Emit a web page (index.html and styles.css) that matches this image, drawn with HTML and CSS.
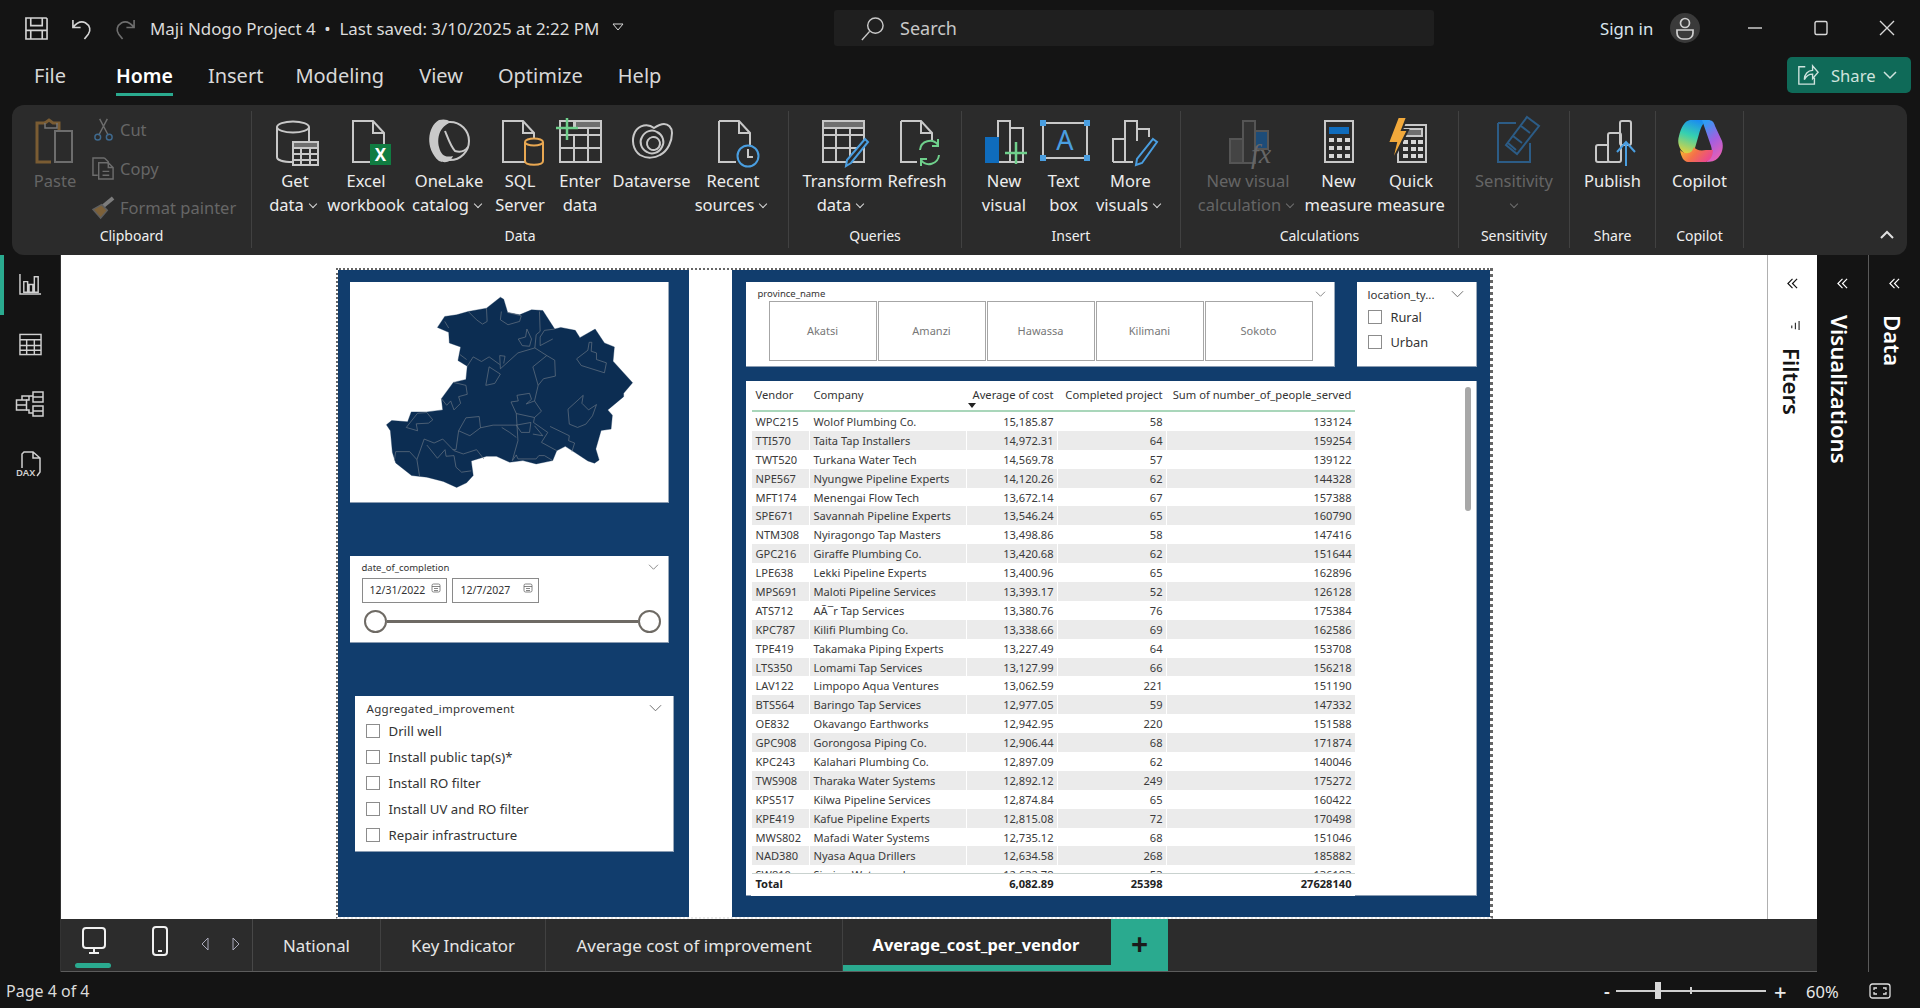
FILE: index.html
```html
<!DOCTYPE html>
<html lang="en">
<head>
<meta charset="utf-8">
<title>Maji Ndogo Project 4</title>
<link rel="stylesheet" href="styles.css">
</head>
<body>
<div class="app">
  <header class="titlebar">
    <svg class="tb-ic save" viewBox="0 0 24 24"><path d="M1 1h21l1 1v21H1zM6 1v8h12V1M6 23v-9h12v9M1 14h22"/></svg>
    <svg class="tb-ic undo" viewBox="0 0 24 24"><path d="M2 3v8h8M2 11c4-5 9-7 13-5 5 3 6 8 3 12l-4 5"/></svg>
    <svg class="tb-ic redo" viewBox="0 0 24 24"><path d="M22 3v8h-8M22 11c-4-5-9-7-13-5-5 3-6 8-3 12l4 5"/></svg>
    <span class="doc-title">Maji Ndogo Project 4&nbsp; •&nbsp; Last saved: 3/10/2025 at 2:22 PM</span>
    <svg class="doc-caret" viewBox="0 0 12 8"><path d="M1 1h10L6 7z"/></svg>
    <div class="searchbox">
      <svg viewBox="0 0 26 26"><circle cx="16" cy="10" r="8"/><path d="M10 16L2 25"/></svg>
      <span>Search</span>
    </div>
    <span class="signin">Sign in</span>
    <svg class="avatar" viewBox="0 0 30 30"><circle cx="15" cy="15" r="15" class="av-bg"/><circle cx="15" cy="10" r="4.5"/><path d="M7 17h16v3a6 6 0 0 1-6 6h-4a6 6 0 0 1-6-6z"/></svg>
    <div class="winbtns">
      <svg viewBox="0 0 16 16"><path d="M1 8h14"/></svg>
      <svg viewBox="0 0 16 16"><rect x="2" y="1.500" width="12" height="13" rx="1.500"/></svg>
      <svg viewBox="0 0 16 16"><path d="M1 1l14 14M15 1L1 15"/></svg>
    </div>
  </header>

  <nav class="tabs">
    <a class="tab file">File</a>
    <a class="tab active">Home</a>
    <a class="tab ins">Insert</a>
    <a class="tab">Modeling</a>
    <a class="tab">View</a>
    <a class="tab">Optimize</a>
    <a class="tab">Help</a>
    <button class="share">
      <svg viewBox="0 0 24 24"><path d="M9 3H2v19h17v-7M8 17c0-6 4-10 9-10V2l6 7-6 7v-5c-4 0-7 2-9 6z"/></svg>
      <span>Share</span>
      <svg class="share-v" viewBox="0 0 14 8"><path d="M1 1l6 6 6-6"/></svg>
    </button>
  </nav>

  <section class="ribbon">
    <div class="group g-clip">
      <div class="items">
        <div class="rb dim">
          <svg class="ri" viewBox="0 0 48 48"><path class="brown" d="M14 6H6v39h14"/><path class="brown" d="M14 6l4-3 4 3h6v8"/><path d="M14 6v5h12V6" class="brown thin"/><rect x="24" y="14" width="17" height="31" fill="#2b2b2b" stroke="#6d6d6d"/></svg>
          <span>Paste</span>
        </div>
        <div class="clip-list">
          <div class="ci">
            <svg viewBox="0 0 24 24"><path d="M8 1l9 17M16 1L7 18"/><circle cx="6" cy="20" r="3" stroke="#3f6a8f"/><circle cx="18" cy="20" r="3" stroke="#3f6a8f"/></svg>
            <span>Cut</span>
          </div>
          <div class="ci">
            <svg viewBox="0 0 24 24"><path d="M13 1H1v18h5M13 1l4 4v2"/><path d="M7 6h10l5 5v12H7zM17 6v5h5M11 15h7M11 19h7"/></svg>
            <span>Copy</span>
          </div>
          <div class="ci">
            <svg viewBox="0 0 24 24"><path d="M22 2L10 12" stroke-width="4" stroke="#7c7c7c"/><path d="M10 9l6 6-7 8-8-9z" fill="#7d6139" stroke="#5f5f5f"/></svg>
            <span>Format painter</span>
          </div>
        </div>
      </div>
      <div class="glabel">Clipboard</div>
    </div>

    <div class="group g-data">
      <div class="items">
        <div class="rb">
          <svg class="ri" viewBox="0 0 48 48"><path d="M6 10v30c0 3 6 5 16 5M38 10v15"/><ellipse cx="22" cy="10" rx="16" ry="5.500"/><rect x="22" y="25" width="25" height="23" fill="#2b2b2b"/><rect x="22" y="25" width="25" height="6" class="fgray"/><path d="M22 37h25M22 43h25M30 31v17M39 31v17"/></svg>
          <span>Get<br>data<i class="chev"></i></span>
        </div>
        <div class="rb">
          <svg class="ri" viewBox="0 0 48 48"><path d="M11 4h20l11 12v29H11zM31 4v12h11"/><rect x="28" y="27" width="21" height="21" fill="#107c41" stroke="none"/><text x="38.500" y="44" class="xl">X</text></svg>
          <span>Excel<br>workbook</span>
        </div>
        <div class="rb">
          <svg class="ri" viewBox="0 0 48 48"><circle cx="25" cy="24" r="19"/><path d="M14 3C2 10 0 32 14 44c8 3 12 0 14-5-8 2-12-1-14-9-2-9 0-20 12-25-4-3-8-3-12-2z" fill="#c9c9c9" stroke="none"/><path d="M20 14c4 10 6 16 10 20 6 2 10 0 13-4"/></svg>
          <span>OneLake<br>catalog<i class="chev"></i></span>
        </div>
        <div class="rb">
          <svg class="ri" viewBox="0 0 48 48"><path d="M7 4h20l11 12v29H7zM27 4v12h11"/><path class="org" d="M29 25v19c0 5 18 5 18 0V25" fill="#2b2b2b"/><ellipse class="org" cx="38" cy="25" rx="9" ry="3.500" fill="#2b2b2b"/></svg>
          <span>SQL<br>Server</span>
        </div>
        <div class="rb">
          <svg class="ri" viewBox="0 0 48 48"><rect x="4" y="4" width="41" height="41"/><rect x="19" y="4" width="26" height="7" class="fgray"/><path d="M4 18h41M4 31h41M18 18v27M32 11v34M18 4v6"/><path d="M11 1v22M0 11h22" class="grn"/></svg>
          <span>Enter<br>data</span>
        </div>
        <div class="rb">
          <svg class="ri" viewBox="0 0 48 48"><path d="M26 11C20 6 11 8 7 15 3 23 5 33 12 38c7 4 15 3 20 0 8-4 12-14 12-22 0-6-4-9-8-9-4 0-7 2-10 4z"/><path d="M14 20c3-6 10-8 15-5 6 3 8 10 5 15-3 6-10 8-15 5-6-3-8-10-5-15z"/><path d="M20 23c2-3 6-4 9-2 3 2 4 6 2 9-2 3-6 4-9 2-3-2-4-6-2-9z"/></svg>
          <span>Dataverse</span>
        </div>
        <div class="rb">
          <svg class="ri" viewBox="0 0 48 48"><path d="M10 4h20l11 12v12M10 4v41h17M30 4v12h11"/><circle cx="39" cy="39" r="10.500" class="blue" fill="#2b2b2b"/><path d="M39 32v8h5"/></svg>
          <span>Recent<br>sources<i class="chev"></i></span>
        </div>
      </div>
      <div class="glabel">Data</div>
    </div>

    <div class="group g-query">
      <div class="items">
        <div class="rb">
          <svg class="ri" viewBox="0 0 48 48"><rect x="4" y="4" width="41" height="41"/><rect x="4" y="4" width="41" height="7" class="fgray"/><path d="M4 18h41M4 31h41M17 11v34M31 11v34"/><path d="M46 22l3 3-17 21-5 3 1-6z" class="blue" fill="#2b2b2b"/></svg>
          <span>Transform<br>data<i class="chev"></i></span>
        </div>
        <div class="rb">
          <svg class="ri" viewBox="0 0 48 48"><path d="M8 4h20l11 12v8M8 4v41h16M28 4v12h11"/><path class="grn thin" d="M27 33a10 10 0 0 1 18-5M46 38a10 10 0 0 1-18 5M45 22v7h-6M28 49v-7h6"/></svg>
          <span>Refresh</span>
        </div>
      </div>
      <div class="glabel">Queries</div>
    </div>

    <div class="group g-insert">
      <div class="items">
        <div class="rb">
          <svg class="ri" viewBox="0 0 48 48"><rect x="30" y="11" width="13" height="34" class="fgray2"/><rect x="18" y="4" width="12" height="41"/><rect x="6" y="21" width="12" height="24" fill="#0f6cbd" stroke="#0f6cbd"/><path d="M36 25v22M25 36h22" class="grn"/></svg>
          <span>New<br>visual</span>
        </div>
        <div class="rb">
          <svg class="ri" viewBox="0 0 48 48"><rect x="3" y="6" width="44" height="35"/><path d="M1 4h4v4H1zM45 4h4v4h-4zM1 39h4v4H1zM45 39h4v4h-4z" fill="#4a9ee0" stroke="#4a9ee0"/><text x="25" y="33" class="tbA">A</text></svg>
          <span>Text<br>box</span>
        </div>
        <div class="rb">
          <svg class="ri" viewBox="0 0 48 48"><path d="M6 45V22h12M18 45V4h12v20M30 12h12v8M6 45h20"/><path d="M46 22l4 3-15 21-6 2 1-6z" class="blue" fill="#2b2b2b"/></svg>
          <span>More<br>visuals<i class="chev"></i></span>
        </div>
      </div>
      <div class="glabel">Insert</div>
    </div>

    <div class="group g-calc">
      <div class="items">
        <div class="rb dim">
          <svg class="ri" viewBox="0 0 48 48"><rect x="6" y="22" width="13" height="24" fill="#444" stroke="#555"/><rect x="19" y="4" width="12" height="42" fill="#333" stroke="#555"/><rect x="31" y="14" width="13" height="18" fill="#1d4c78" stroke="#555"/><text x="27" y="46" class="fx">fx</text></svg>
          <span>New visual<br>calculation<i class="chev"></i></span>
        </div>
        <div class="rb">
          <svg class="ri" viewBox="0 0 48 48"><rect x="10" y="4" width="28" height="41"/><rect x="14" y="10" width="20" height="7" fill="#0f6cbd" stroke="none"/><path d="M14 21h5v4h-5zM22 21h5v4h-5zM30 21h5v4h-5zM14 29h5v4h-5zM22 29h5v4h-5zM30 29h5v4h-5zM14 37h5v4h-5zM22 37h5v4h-5zM30 37h5v4h-5z" fill="#d6d6d6" stroke="none"/></svg>
          <span>New<br>measure</span>
        </div>
        <div class="rb">
          <svg class="ri" viewBox="0 0 48 48"><rect x="11" y="8" width="28" height="37"/><rect x="16" y="12" width="19" height="7" class="fgray" stroke="none"/><path d="M16 23h5v4h-5zM24 23h5v4h-5zM31 23h5v4h-5zM16 30h5v4h-5zM24 30h5v4h-5zM31 30h5v4h-5zM16 37h5v4h-5zM24 37h5v4h-5zM31 37h5v4h-5z" fill="#d6d6d6" stroke="none"/><path d="M11 0h9l-5 13h6L4 47l5-21H1z" fill="#f2a93b" stroke="#2b2b2b"/></svg>
          <span>Quick<br>measure</span>
        </div>
      </div>
      <div class="glabel">Calculations</div>
    </div>

    <div class="group g-sens">
      <div class="items">
        <div class="rb dim">
          <svg class="ri" viewBox="0 0 48 48"><path class="dblue" d="M8 6h18M8 6v39h32V26"/><path class="dblue" d="M37 0l12 9-22 28-11-9z" fill="#2b2b2b"/><path class="dblue" d="M18 26l8 7M23 19l9 7M31 9l9 7"/></svg>
          <span>Sensitivity<br><i class="chev solo"></i></span>
        </div>
      </div>
      <div class="glabel">Sensitivity</div>
    </div>

    <div class="group g-share">
      <div class="items">
        <div class="rb">
          <svg class="ri" viewBox="0 0 48 48"><rect x="7" y="28" width="13" height="17" rx="2"/><rect x="19" y="16" width="13" height="29" rx="2" fill="#2b2b2b"/><rect x="31" y="4" width="11" height="24" rx="2"/><path d="M31 45h-8" /><path d="M37 49V26M28 35l9-10 9 10" class="blue"/></svg>
          <span>Publish</span>
        </div>
      </div>
      <div class="glabel">Share</div>
    </div>

    <div class="group g-copilot">
      <div class="items">
        <div class="rb">
          <svg class="ri" viewBox="0 0 48 48">
            <defs>
              <linearGradient id="cpa" x1="0.600" y1="0" x2="0.300" y2="1"><stop offset="0" stop-color="#1b8df0"/><stop offset=".45" stop-color="#35d0b0"/><stop offset="1" stop-color="#e8d23a"/></linearGradient>
              <linearGradient id="cpb" x1="0.300" y1="0" x2="0.700" y2="1"><stop offset="0" stop-color="#2f9cf5"/><stop offset=".5" stop-color="#a35fe0"/><stop offset="1" stop-color="#ef5fb0"/></linearGradient>
              <linearGradient id="cpc" x1="0" y1="0" x2="1" y2="0.400"><stop offset="0" stop-color="#f8c22e"/><stop offset=".55" stop-color="#f4704a"/><stop offset="1" stop-color="#ea4a8a"/></linearGradient>
            </defs>
            <path d="M14 3H32C27 5 25 10 23 17L19 31C17 36 12 40 8 36C3 32 1 25 3 19C5 11 8 4 14 3Z" fill="url(#cpa)" stroke="none"/>
            <path d="M26 3h6c4 0 6 2 7 6l7 15c2 6 0 13-4 17-3 3-7 4-12 4 5-4 7-10 5-16z" fill="url(#cpb)" stroke="none"/>
            <path d="M4 33c3 3 8 5 12 1l2-4c2 3 6 4 12 3h7c0 5-2 10-7 12H12C8 45 5 40 4 33z" fill="url(#cpc)" stroke="none"/>
          </svg>
          <span>Copilot</span>
        </div>
      </div>
      <div class="glabel">Copilot</div>
    </div>
    <svg class="collapse" viewBox="0 0 14 8"><path d="M1 7l6-6 6 6"/></svg>
  </section>

  <main class="main">
    <aside class="rail">
      <div class="rail-item on"><svg viewBox="0 0 24 24"><path d="M1 1v21h22M5 9h4v11H5zM10.500 12h4v8h-4zM16 4h4v16h-4z"/></svg></div>
      <div class="rail-item"><svg viewBox="0 0 24 24"><rect x="1" y="1.500" width="22" height="21"/><path d="M1 7h22M1 13h22M1 18h22M8 7v16M16 7v16" /></svg></div>
      <div class="rail-item"><svg class="wide" viewBox="0 0 28 28"><rect x="0.500" y="10" width="10" height="10"/><path d="M0.500 15h10M17 2h10v10H17zM17 7h10M17 16h10v10H17zM17 21h10M10 10h3V6h4M10 20h3v3h4M6 10V6h11"/></svg></div>
      <div class="rail-item"><svg class="dax" viewBox="0 0 28 26"><path d="M6 17V3l2-2h9l7 6v14l-3 4M17 1v6h7"/><text x="0" y="25" class="daxt">DAX</text></svg></div>
    </aside>

    <div class="center">
      <div class="workspace">
        <div class="canvas">
          <div class="report">
            <div class="panel left-panel">
              <div class="card map-card">
                <svg viewBox="60 66 956 664">
                  <path class="land" d="M168 497L184 484L232 488L243 458L290 458L338 452L334 418L370 369L408 360L412 320L384 303L392 262L358 250L356 218L322 203L344 170L380 165L415 155L470 145L512 112L522 118L534 158L570 165L606 150L640 152L676 208L694 203L738 212L752 234L798 208L826 250L856 262L852 305L911 370L884 402L884 412L836 452L850 468L846 510L816 514L800 570L810 603L796 613L776 606L736 580L708 562L682 575L670 605L620 615L580 605L540 610L500 592L470 592L424 606L430 650L410 672L380 686L340 668L290 655L244 650L196 612L186 580L180 515Z"/>
                  <path class="bound" d="M415 155L440 180L458 193L472 185L470 145M515 155L512 180L535 195L570 185L575 168L534 158M630 155L632 215L620 225L616 265L565 280L512 328L510 288L526 290L522 312M412 320L430 292L455 306L478 292L510 315M592 208L606 238L600 260L578 258L566 238L588 232ZM676 208L645 212L632 232L632 258L670 238M616 265L652 288L676 302L678 350L642 358L626 378L610 322L652 288M626 378L615 425L636 456L615 475L560 463L544 428L566 425L562 408L600 402L606 420L590 434L615 425M560 463L565 545L548 605M615 475L612 490L655 520L636 550L682 575M662 502L720 530L718 545L736 552L728 578M780 248L788 248L786 275L802 280L802 300L832 310L826 340L756 318L742 298L776 272ZM762 408L758 432L778 452L802 436L790 470L770 495L745 505L720 495L716 450ZM478 322L512 344L495 372L468 378ZM370 369L408 378L412 405L386 412L392 432L372 452L362 425L350 438L334 418M262 462L290 460L308 482L295 492L258 494L262 515L228 505ZM408 476L448 472L452 506L420 530L386 515ZM452 506L490 498L560 498L604 490L600 520L575 520L560 498M516 505L540 520L560 535M386 515L378 572L368 572M282 540L260 602L238 578L196 578L192 605M260 602L268 652M282 540L312 552L338 540L372 575L400 585L440 572L462 600M290 558L322 598L345 572L348 592L372 590L378 625L395 640L424 636M548 605L560 588L565 600L620 600L628 590L645 590L670 605M615 500L640 530L610 525M344 185L356 205M390 285L410 300"/>
                </svg>
              </div>
              <div class="card date-card">
                <div class="date-head"><span>date_of_completion</span><svg class="chv" viewBox="0 0 14 8"><path d="M1 1l6 6 6-6"/></svg></div>
                <div class="date-inputs">
                  <div class="date-in di1"><span>12/31/2022</span><svg viewBox="0 0 10 10"><rect x="1" y="1" width="8" height="8" rx="1.500"/><path d="M1 3.500h8M3 5.500h4M3 7.500h4"/></svg></div>
                  <div class="date-in di2"><span>12/7/2027</span><svg viewBox="0 0 10 10"><rect x="1" y="1" width="8" height="8" rx="1.500"/><path d="M1 3.500h8M3 5.500h4M3 7.500h4"/></svg></div>
                </div>
                <div class="slider"><i class="thumb"></i><i class="track"></i><i class="thumb"></i></div>
              </div>
              <div class="card agg-card">
                <div class="agg-head"><span>Aggregated_improvement</span><svg class="chv" viewBox="0 0 14 8"><path d="M1 1l6 6 6-6"/></svg></div>
                <div class="opt"><i class="cb"></i>Drill well</div>
                <div class="opt"><i class="cb"></i>Install public tap(s)*</div>
                <div class="opt"><i class="cb"></i>Install RO filter</div>
                <div class="opt"><i class="cb"></i>Install UV and RO filter</div>
                <div class="opt"><i class="cb"></i>Repair infrastructure</div>
              </div>
            </div>

            <div class="panel right-panel">
              <div class="slicers">
                <div class="card prov-card">
                  <div class="prov-head"><span>province_name</span><svg class="chv" viewBox="0 0 14 8"><path d="M1 1l6 6 6-6"/></svg></div>
                  <div class="prov-btns">
                    <div class="pb">Akatsi</div><div class="pb">Amanzi</div><div class="pb">Hawassa</div><div class="pb">Kilimani</div><div class="pb">Sokoto</div>
                  </div>
                </div>
                <div class="card loc-card">
                  <div class="loc-head"><span>location_ty...</span><svg class="chv" viewBox="0 0 14 8"><path d="M1 1l6 6 6-6"/></svg></div>
                  <div class="opt loc"><i class="cb"></i>Rural</div>
                  <div class="opt loc"><i class="cb"></i>Urban</div>
                </div>
              </div>
              <div class="card table-card">
                <div class="grid-row head">
                  <span>Vendor</span><span>Company</span><span class="num sorted">Average of cost<i class="sort"></i></span><span class="num">Completed project</span><span class="num">Sum of number_of_people_served</span>
                </div>
                <div class="rows">
                  <div class="grid-row"><span>WPC215</span><span>Wolof Plumbing Co.</span><span class="num">15,185.87</span><span class="num">58</span><span class="num">133124</span></div>
                  <div class="grid-row"><span>TTI570</span><span>Taita Tap Installers</span><span class="num">14,972.31</span><span class="num">64</span><span class="num">159254</span></div>
                  <div class="grid-row"><span>TWT520</span><span>Turkana Water Tech</span><span class="num">14,569.78</span><span class="num">57</span><span class="num">139122</span></div>
                  <div class="grid-row"><span>NPE567</span><span>Nyungwe Pipeline Experts</span><span class="num">14,120.26</span><span class="num">62</span><span class="num">144328</span></div>
                  <div class="grid-row"><span>MFT174</span><span>Menengai Flow Tech</span><span class="num">13,672.14</span><span class="num">67</span><span class="num">157388</span></div>
                  <div class="grid-row"><span>SPE671</span><span>Savannah Pipeline Experts</span><span class="num">13,546.24</span><span class="num">65</span><span class="num">160790</span></div>
                  <div class="grid-row"><span>NTM308</span><span>Nyiragongo Tap Masters</span><span class="num">13,498.86</span><span class="num">58</span><span class="num">147416</span></div>
                  <div class="grid-row"><span>GPC216</span><span>Giraffe Plumbing Co.</span><span class="num">13,420.68</span><span class="num">62</span><span class="num">151644</span></div>
                  <div class="grid-row"><span>LPE638</span><span>Lekki Pipeline Experts</span><span class="num">13,400.96</span><span class="num">65</span><span class="num">162896</span></div>
                  <div class="grid-row"><span>MPS691</span><span>Maloti Pipeline Services</span><span class="num">13,393.17</span><span class="num">52</span><span class="num">126128</span></div>
                  <div class="grid-row"><span>ATS712</span><span>AÃ¯r Tap Services</span><span class="num">13,380.76</span><span class="num">76</span><span class="num">175384</span></div>
                  <div class="grid-row"><span>KPC787</span><span>Kilifi Plumbing Co.</span><span class="num">13,338.66</span><span class="num">69</span><span class="num">162586</span></div>
                  <div class="grid-row"><span>TPE419</span><span>Takamaka Piping Experts</span><span class="num">13,227.49</span><span class="num">64</span><span class="num">153708</span></div>
                  <div class="grid-row"><span>LTS350</span><span>Lomami Tap Services</span><span class="num">13,127.99</span><span class="num">66</span><span class="num">156218</span></div>
                  <div class="grid-row"><span>LAV122</span><span>Limpopo Aqua Ventures</span><span class="num">13,062.59</span><span class="num">221</span><span class="num">151190</span></div>
                  <div class="grid-row"><span>BTS564</span><span>Baringo Tap Services</span><span class="num">12,977.05</span><span class="num">59</span><span class="num">147332</span></div>
                  <div class="grid-row"><span>OE832</span><span>Okavango Earthworks</span><span class="num">12,942.95</span><span class="num">220</span><span class="num">151588</span></div>
                  <div class="grid-row"><span>GPC908</span><span>Gorongosa Piping Co.</span><span class="num">12,906.44</span><span class="num">68</span><span class="num">171874</span></div>
                  <div class="grid-row"><span>KPC243</span><span>Kalahari Plumbing Co.</span><span class="num">12,897.09</span><span class="num">62</span><span class="num">140046</span></div>
                  <div class="grid-row"><span>TWS908</span><span>Tharaka Water Systems</span><span class="num">12,892.12</span><span class="num">249</span><span class="num">175272</span></div>
                  <div class="grid-row"><span>KPS517</span><span>Kilwa Pipeline Services</span><span class="num">12,874.84</span><span class="num">65</span><span class="num">160422</span></div>
                  <div class="grid-row"><span>KPE419</span><span>Kafue Pipeline Experts</span><span class="num">12,815.08</span><span class="num">72</span><span class="num">170498</span></div>
                  <div class="grid-row"><span>MWS802</span><span>Mafadi Water Systems</span><span class="num">12,735.12</span><span class="num">68</span><span class="num">151046</span></div>
                  <div class="grid-row"><span>NAD380</span><span>Nyasa Aqua Drillers</span><span class="num">12,634.58</span><span class="num">268</span><span class="num">185882</span></div>
                  <div class="grid-row"><span>SW810</span><span>Simien Waterworks</span><span class="num">12,632.78</span><span class="num">53</span><span class="num">136183</span></div>
                </div>
                <div class="grid-row total">
                  <span>Total</span><span></span><span class="num">6,082.89</span><span class="num">25398</span><span class="num">27628140</span>
                </div>
                <i class="scrollthumb"></i>
              </div>
            </div>
          </div>
        </div>
        <aside class="filters">
          <svg class="dbl" viewBox="0 0 12 12"><path d="M6 1L1 6l5 5M11 1L6 6l5 5"/></svg>
          <svg class="filter-ic" viewBox="0 0 12 12"><path d="M11 1v10M7 3v7M3 6v3"/></svg>
          <span class="vtext">Filters</span>
        </aside>
      </div>
      <div class="pagebar">
        <div class="views">
          <span class="view on"><svg viewBox="0 0 24 28"><rect x="1" y="1" width="22" height="20" rx="3"/><path d="M12 21v4M7 26h10"/></svg></span>
          <span class="view phone"><svg viewBox="0 0 16 30"><rect x="1" y="1" width="14" height="28" rx="3"/><path d="M6 25h4"/></svg></span>
          <svg class="pg-arrow" viewBox="0 0 8 14"><path d="M7 1L1 7l6 6z"/></svg>
          <svg class="pg-arrow" viewBox="0 0 8 14"><path d="M1 1l6 6-6 6z"/></svg>
        </div>
        <a class="pg pg1">National</a>
        <a class="pg pg2">Key Indicator</a>
        <a class="pg pg3">Average cost of improvement</a>
        <a class="pg pg4 sel">Average_cost_per_vendor</a>
        <a class="pg-add">+</a>
      </div>
    </div>

    <aside class="vpane viz">
      <svg class="dbl" viewBox="0 0 12 12"><path d="M6 1L1 6l5 5M11 1L6 6l5 5"/></svg>
      <span class="vtext">Visualizations</span>
    </aside>
    <aside class="vpane data">
      <svg class="dbl" viewBox="0 0 12 12"><path d="M6 1L1 6l5 5M11 1L6 6l5 5"/></svg>
      <span class="vtext">Data</span>
    </aside>
  </main>

  <footer class="status">
    <span class="pageno">Page 4 of 4</span>
    <div class="zoom">
      <span class="zm">-</span>
      <div class="zslider"><i class="ztick"></i><i class="zthumb"></i></div>
      <span class="zp">+</span>
      <span class="zv">60%</span>
      <svg viewBox="0 0 22 16"><rect x="1" y="1" width="20" height="14" rx="2.500"/><path d="M5 7V5h3M17 7V5h-3M5 9v2h3M17 9v2h-3"/></svg>
    </div>
  </footer>
</div>
</body>
</html>
```

FILE: styles.css
```css
* { box-sizing: border-box; }
html, body { margin: 0; height: 100%; overflow: hidden; }
body { background: #141414; color: #e6e6e6; font-family: "Noto Sans", "Open Sans", sans-serif; }
.app { width: 1920px; height: 1008px; display: flex; flex-direction: column; }
svg { display: block; overflow: visible; }
i { display: block; font-style: normal; }

/* Title bar */
.titlebar { height: 56px; flex: none; display: flex; align-items: center; padding-left: 25px; }
.tb-ic { width: 23px; height: 23px; fill: none; stroke: #d4d4d4; stroke-width: 1.700; flex: none; }
.undo { margin-left: 23px; }
.redo { margin-left: 19px; stroke: #6e6e6e; }
.doc-title { margin-left: 14px; font-size: 16.900px; color: #dcdcdc; white-space: nowrap; width: 460px; }
.doc-caret { width: 12px; height: 8px; margin-left: 2px; margin-top: -2px; fill: none; stroke: #d8d8d8; }
.searchbox { width: 600px; height: 36px; margin-left: 210px; background: #1f1f1f; border-radius: 3px; display: flex; align-items: center; padding-left: 26px; gap: 15px; color: #c8c8c8; font-size: 18px; }
.searchbox svg { width: 25px; height: 25px; fill: none; stroke: #c8c8c8; stroke-width: 1.500; }
.signin { margin-left: 166px; font-size: 16.800px; color: #d9e4ee; width: 70px; }
.avatar { width: 30px; height: 30px; fill: none; stroke: #d0d0d0; stroke-width: 1.700; margin-left: 0; }
.av-bg { fill: #3a3a3a; stroke: none; }
.winbtns { display: flex; margin-left: 47px; gap: 50px; }
.winbtns svg { width: 16px; height: 16px; fill: none; stroke: #d8d8d8; stroke-width: 1.400; }

/* Tab row */
.tabs { height: 49px; flex: none; display: flex; align-items: flex-start; padding-left: 34px; gap: 35px; position: relative; }
.tab { font-size: 20px; color: #d8d8d8; height: 40px; line-height: 40px; white-space: nowrap; }
.tab.file { margin-right: 15px; }
.tab.ins { margin-right: -3px; }
.tab.active { color: #fff; font-weight: 600; font-size: 19.500px; border-bottom: 3px solid #2aaa8f; }
.share { margin-left: auto; margin-right: 9px; margin-top: 1px; width: 124px; height: 36px; background: #0f6a58; border: 0; border-radius: 5px; color: #cfe3de; font: inherit; font-size: 16.600px; display: flex; align-items: center; padding: 0 8px 0 10px; }
.share svg { width: 22px; height: 22px; fill: none; stroke: #cfe3de; stroke-width: 1.500; flex: none; }
.share span { margin-left: 12px; }
.share .share-v { width: 14px; height: 8px; margin-left: 7px; }

/* Ribbon */
.ribbon { height: 150px; flex: none; margin: 0 13px 0 12px; background: #2b2b2b; border-radius: 12px; display: flex; padding-top: 6px; position: relative; color: #ededed; }
.group { height: 137px; border-right: 1px solid #414141; display: flex; flex-direction: column; flex: none; }
.items { height: 115px; flex: none; padding-top: 6px; display: flex; }
.glabel { text-align: center; font-size: 14px; line-height: 20px; color: #f0f0f0; white-space: nowrap; }
.g-clip { width: 240px; }
.g-data { width: 537px; }
.g-query { width: 173px; }
.g-insert { width: 219px; }
.g-calc { width: 278px; }
.g-sens { width: 111px; }
.g-share { width: 86px; }
.g-copilot { width: 88px; }
.g-clip .items { padding-left: 8px; }
.g-data .items { padding-left: 8px; }
.g-query .items { padding-left: 16px; }
.g-insert .items { padding-left: 12px; }
.g-calc .items { padding-left: 11px; }
.rb { display: flex; flex-direction: column; align-items: center; text-align: center; flex: none; width: 100%; font-size: 16.500px; line-height: 24px; white-space: nowrap; }
.rb .ri { width: 48px; height: 48px; flex: none; margin-bottom: 4px; fill: none; stroke: #c8c8c8; stroke-width: 2; }
.g-clip .rb { width: 70px; color: #6c6c6c; }
.g-data .rb:nth-child(1) { width: 70px; }
.g-data .rb:nth-child(2) { width: 72px; }
.g-data .rb:nth-child(3) { width: 94px; }
.g-data .rb:nth-child(4) { width: 48px; }
.g-data .rb:nth-child(5) { width: 72px; }
.g-data .rb:nth-child(6) { width: 71px; }
.g-data .rb:nth-child(7) { width: 92px; }
.g-query .rb:nth-child(1) { width: 75px; }
.g-query .rb:nth-child(2) { width: 74px; }
.g-insert .rb:nth-child(1) { width: 60px; }
.g-insert .rb:nth-child(2) { width: 59px; }
.g-insert .rb:nth-child(3) { width: 75px; }
.g-calc .rb:nth-child(1) { width: 112px; }
.g-calc .rb:nth-child(2) { width: 69px; }
.g-calc .rb:nth-child(3) { width: 76px; }
.rb.dim { color: #656565; }
.rb.dim .chev { border-color: #6e6e6e; }
.chev { display: inline-block; width: 6px; height: 6px; border-right: 1.300px solid #d8d8d8; border-bottom: 1.300px solid #d8d8d8; transform: rotate(45deg); margin: 0 5px 4px 6px; }
.chev.solo { margin: 0 0 4px; }
.clip-list { display: flex; flex-direction: column; margin-left: 2px; margin-top: -7px; }
.ci { height: 39px; flex: none; display: flex; align-items: center; gap: 5px; font-size: 16.500px; color: #666; white-space: nowrap; }
.ci svg { width: 23px; height: 23px; fill: none; stroke: #6d6d6d; stroke-width: 1.500; flex: none; }
.brown { stroke: #7a5c33; stroke-width: 3; }
.brown.thin { stroke-width: 1.500; stroke: #777; }
.fgray { fill: #6f6f6f; stroke: #c8c8c8; }
.fgray2 { fill: #2b2b2b; }
.grn { stroke: #6fd08c; stroke-width: 2.500; }
.grn.thin { stroke-width: 2; }
.org { stroke: #e9a852; }
.blue { stroke: #4a9ee0; stroke-width: 2; }
.dblue { stroke: #2c5c86; }
.xl { font-family: "Noto Sans", sans-serif; font-size: 17px; font-weight: 700; fill: #fff; stroke: none; text-anchor: middle; }
.tbA { font-family: "Noto Sans", sans-serif; font-size: 27px; fill: #4a9ee0; stroke: none; text-anchor: middle; }
.fx { font-family: "Liberation Serif", serif; font-style: italic; font-size: 28px; fill: #666; stroke: none; }
.collapse { position: absolute; right: 13px; top: 126px; width: 14px; height: 8px; fill: none; stroke: #e0e0e0; stroke-width: 2; }

/* Main */
.main { flex: 1; min-height: 0; display: flex; }
.rail { width: 61px; flex: none; border-right: 1px solid #333; }
.rail-item { height: 60px; display: flex; align-items: center; justify-content: center; border-left: 4px solid transparent; padding: 0 4px 2px 0; }
.rail-item.on { border-left-color: #2aaa8f; }
.rail-item svg { width: 23px; height: 23px; fill: none; stroke: #d0d0d0; stroke-width: 1.500; }
.rail-item .wide { width: 28px; height: 28px; }
.rail-item .dax { width: 28px; height: 26px; }
.daxt { font-family: "Noto Sans", sans-serif; font-size: 9.500px; font-weight: 600; fill: #d0d0d0; stroke: none; }
.center { flex: 1; min-width: 0; display: flex; flex-direction: column; }
.workspace { flex: 1; min-height: 0; display: flex; background: #fff; }
.canvas { flex: 1; display: flex; justify-content: center; padding-top: 13px; min-width: 0; }
.report { width: 1157px; height: 651px; display: flex; justify-content: space-between; border: 2px dotted #666; border-width: 2px 3px 2px 2px; border-bottom-color: #e8e8e8; color: #333; }
.panel { background: #113d6d; }
.left-panel { width: 351px; display: flex; flex-direction: column; align-items: flex-start; padding: 12px 0 0 12px; gap: 53px; }
.right-panel { width: 758px; display: flex; flex-direction: column; padding: 12px 13px 0 14px; gap: 14px; }
.card { background: #fff; border-bottom: 1px solid #8a9cb2; border-right: 1px solid #9aaabb; }
.chv { width: 13px; height: 8px; fill: none; stroke: #666; stroke-width: 1; flex: none; }

.map-card { width: 319px; height: 221px; }
.map-card svg { width: 100%; height: 100%; }
.land { fill: #0c2d52; stroke: #0c2d52; }
.bound { fill: none; stroke: #6c7885; stroke-width: 2; }

.date-card { width: 319px; height: 87px; padding: 4px 11px 0 12px; }
.date-head { display: flex; justify-content: space-between; align-items: center; height: 14px; font-size: 9.500px; color: #333; padding-right: 0; margin-right: -2px; }
.date-head .chv { width: 11px; height: 6px; }
.date-inputs { display: flex; gap: 5px; margin-top: 4px; }
.date-in { height: 25px; border: 1px solid #8a8a8a; display: flex; align-items: center; justify-content: space-between; font-size: 10.500px; color: #333; padding: 0 5px 2px 7px; }
.di1 { width: 85px; }
.di2 { width: 87px; padding-left: 8px; }
.date-in svg { width: 10px; height: 10px; fill: none; stroke: #666; stroke-width: .8; margin-top: -3px; }
.slider { display: flex; align-items: center; margin: 6px 0 0 2px; width: 297px; height: 24px; }
.thumb { width: 23px; height: 23px; border-radius: 50%; border: 2px solid #6e6a64; background: #fff; flex: none; }
.track { flex: 1; height: 3px; background: #6e6a64; }

.agg-card { width: 319px; height: 156px; margin-left: 5px; padding: 4px 11px 0 12px; }
.agg-head { display: flex; justify-content: space-between; align-items: center; height: 16px; font-size: 11.500px; color: #333; letter-spacing: .3px; padding-right: 0; margin-bottom: 2px; }
.opt { display: flex; align-items: center; gap: 8px; height: 26px; font-size: 13.200px; color: #333; }
.agg-card .opt { margin-left: -1px; }
.cb { width: 14px; height: 14px; border: 1px solid #8c8c8c; background: #fff; flex: none; }
.agg-card .cb { margin-right: 1px; }

.slicers { display: flex; justify-content: space-between; height: 85px; flex: none; }
.prov-card { width: 589px; padding: 4px 8px 0 12px; }
.prov-head { display: flex; justify-content: space-between; align-items: center; height: 15px; font-size: 9.500px; color: #333; padding-right: 0; }
.prov-head .chv { width: 11px; height: 6px; }
.prov-btns { display: flex; gap: 1px; margin-left: 11px; }
.pb { width: 108px; height: 60px; border: 1px solid #a6a6a6; display: flex; align-items: center; justify-content: center; font-size: 11px; color: #777; padding-bottom: 2px; }
.loc-card { width: 120px; padding: 3px 12px 0 11px; }
.loc-head { display: flex; justify-content: space-between; align-items: center; height: 18px; font-size: 11.500px; color: #333; margin-bottom: 1px; }
.opt.loc { height: 25px; gap: 9px; font-size: 12.800px; }

.table-card { width: 731px; height: 515px; padding: 0 121px 0 6px; position: relative; flex: none; }
.grid-row { display: grid; grid-template-columns: 58px 157px 91px 109px 189px; height: 18.900px; align-items: center; font-size: 11.100px; color: #3a3a3a; white-space: nowrap; }
.grid-row > span { padding: 0 4px 0 4px; box-shadow: -1px 0 0 #fff; height: 100%; display: flex; align-items: center; min-width: 0; }
.grid-row > .num { justify-content: flex-end; }
.rows { height: 461px; overflow: hidden; }
.rows .grid-row:nth-child(even) { background: #ebebeb; }
.grid-row.head { height: 31px; border-bottom: 2px solid #a9d6ba; overflow: visible; color: #333; margin-bottom: 0; font-size: 11.200px; }
.head > span { padding-bottom: 2px; }
.sorted { position: relative; }
.sort { position: absolute; left: 1px; top: 22px; width: 0; height: 0; border: 4px solid transparent; border-top: 5px solid #222; border-bottom: 0; }
.grid-row.total { height: 23px; border-top: 1px solid #c9d2cf; font-weight: 700; color: #222; background: #fff; }
.total > span { padding-bottom: 4px; }
.scrollthumb { position: absolute; left: 719px; top: 6px; width: 6px; height: 124px; border-radius: 3px; background: #a8a8a8; }

/* Right panes */
.filters { width: 50px; flex: none; border-left: 1px solid #b0b0b0; color: #141414; display: flex; flex-direction: column; align-items: center; padding-top: 23px; }
.dbl { width: 11px; height: 11px; fill: none; stroke: currentColor; stroke-width: 1.300; flex: none; }
.filter-ic { width: 11px; height: 11px; fill: none; stroke: #333; stroke-width: 1.300; margin-top: 31px; margin-left: 3px; }
.vtext { writing-mode: vertical-rl; font-size: 22.200px; font-weight: 600; line-height: 24px; white-space: nowrap; }
.filters .vtext { margin-top: 17px; margin-right: 3px; }
.vpane { width: 51px; flex: none; display: flex; flex-direction: column; align-items: center; padding-top: 23px; color: #fff; }
.vpane .vtext { margin-top: 26px; margin-right: 8px; }
.vpane.data .vtext { margin-right: 6px; }
.vpane.data { width: 52px; border-left: 1px solid #5a5a5a; }

/* Page tabs */
.pagebar { height: 53px; flex: none; background: #2c2c2c; border-bottom: 1px solid #5c5c5c; display: flex; }
.views { width: 192px; flex: none; display: flex; align-items: center; border-right: 1px solid #484848; padding: 0 0 2px 14px; }
.view { width: 38px; height: 44px; display: flex; align-items: center; justify-content: center; flex: none; position: relative; padding-bottom: 6px; }
.view svg { width: 24px; height: 28px; fill: none; stroke: #f0f0f0; stroke-width: 2; }
.view.on::after { content: ""; position: absolute; left: 0; right: 2px; bottom: -2px; height: 5px; border-radius: 3px; background: #2aaa8f; }
.view.phone { margin-left: 39px; width: 16px; }
.view.phone svg { width: 16px; height: 30px; }
.pg-arrow { width: 8px; height: 14px; fill: none; stroke: #aab; margin-left: 24px; flex: none; }
.pg-arrow + .pg-arrow { margin-left: 23px; }
.view.phone + .pg-arrow { margin-left: 33px; }
.pg { display: flex; align-items: center; justify-content: center; font-size: 16.800px; color: #e6e6e6; border-right: 1px solid #414141; white-space: nowrap; padding-bottom: 0; flex: none; }
.pg1 { width: 128px; }
.pg2 { width: 165px; }
.pg3 { width: 297px; font-size: 17px; }
.pg4 { width: 268px; border-right: 0; }
.pg.sel { font-weight: 700; color: #fff; border-bottom: 6px solid #2aaa8f; padding: 4px 2px 0 0; font-size: 16.400px; }
.pg-add { width: 57px; background: #2aaa8f; color: #1b1b1b; font-size: 30px; font-weight: 700; display: flex; align-items: center; justify-content: center; padding-bottom: 4px; flex: none; }

/* Status */
.status { height: 36px; flex: none; display: flex; align-items: center; padding: 2px 0 0 6px; }
.pageno { font-size: 16px; color: #dcdcdc; }
.zoom { margin-left: auto; display: flex; align-items: center; padding-right: 29px; color: #e8e8e8; }
.zm { font-size: 18px; width: 16px; font-weight: 600; }
.zslider { width: 150px; height: 2px; background: #cfcfcf; position: relative; margin-left: -4px; }
.zthumb { position: absolute; left: 39px; top: -8px; width: 6px; height: 17px; background: #d8d8d8; }
.ztick { position: absolute; left: 74px; top: -3px; width: 2px; height: 7px; background: #cfcfcf; }
.zp { font-size: 22px; font-weight: 500; margin-left: 8px; width: 14px; line-height: 20px; }
.zv { font-size: 16.500px; margin-left: 18px; width: 63px; }
.zoom svg { width: 22px; height: 16px; fill: none; stroke: #e0e0e0; stroke-width: 1.300; flex: none; }
```
